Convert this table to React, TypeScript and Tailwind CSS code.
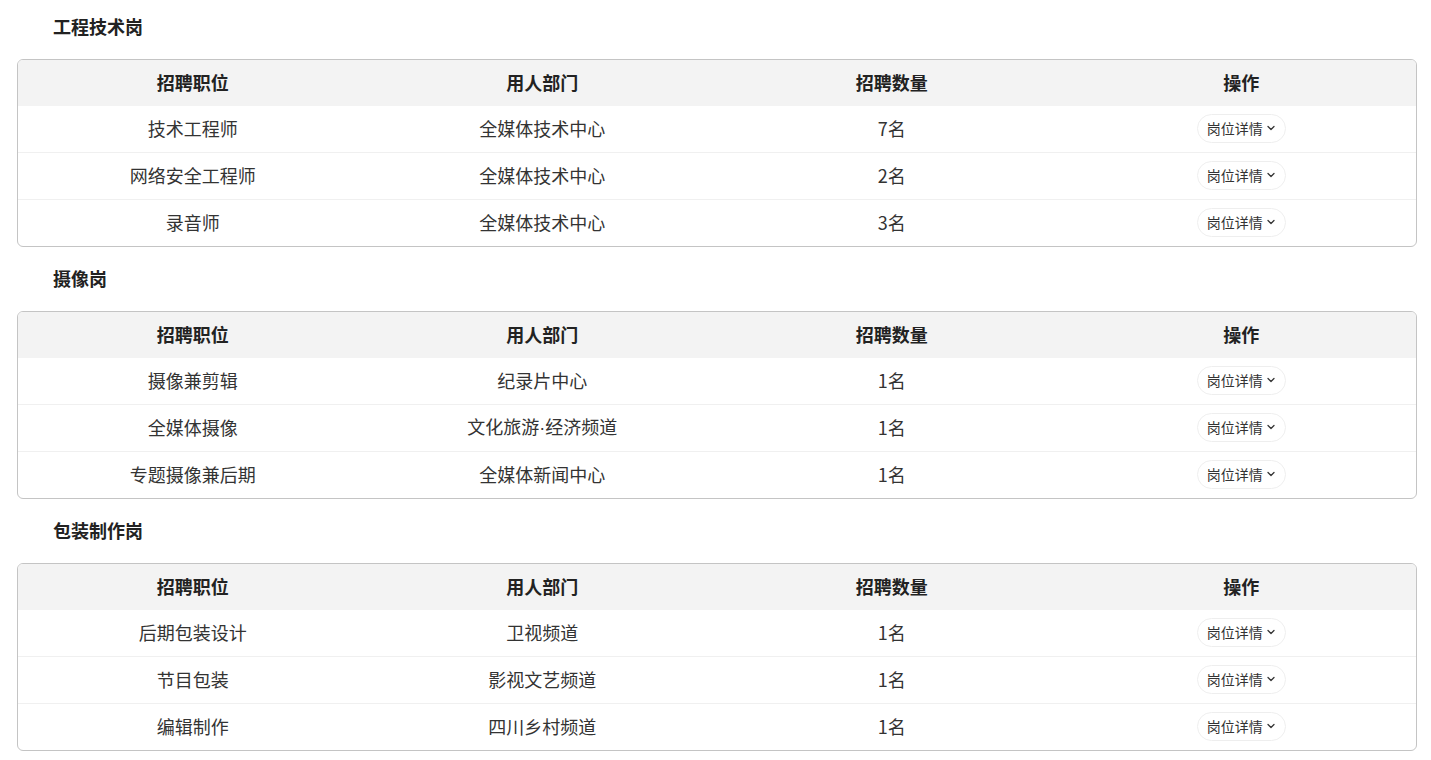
import { ChevronDown } from "lucide-react"
import type { ReactNode } from "react"

type Job = { title: string; dept: ReactNode; count: string }
type Group = { name: string; jobs: Job[] }

const dot = <span style={{ fontFamily: '"Liberation Sans", sans-serif' }}>·</span>

const groups: Group[] = [
  {
    name: "工程技术岗",
    jobs: [
      { title: "技术工程师", dept: "全媒体技术中心", count: "7名" },
      { title: "网络安全工程师", dept: "全媒体技术中心", count: "2名" },
      { title: "录音师", dept: "全媒体技术中心", count: "3名" },
    ],
  },
  {
    name: "摄像岗",
    jobs: [
      { title: "摄像兼剪辑", dept: "纪录片中心", count: "1名" },
      { title: "全媒体摄像", dept: <>文化旅游{dot}经济频道</>, count: "1名" },
      { title: "专题摄像兼后期", dept: "全媒体新闻中心", count: "1名" },
    ],
  },
  {
    name: "包装制作岗",
    jobs: [
      { title: "后期包装设计", dept: "卫视频道", count: "1名" },
      { title: "节目包装", dept: "影视文艺频道", count: "1名" },
      { title: "编辑制作", dept: "四川乡村频道", count: "1名" },
    ],
  },
]

const headers = ["招聘职位", "用人部门", "招聘数量", "操作"]

function JobTable({ jobs }: { jobs: Job[] }) {
  return (
    <div className="ml-[17px] mr-[14px] border border-[#c4c4c4] rounded-[6px] overflow-hidden">
      <div className="grid grid-cols-4 h-[46px] items-center bg-[#f3f3f3] text-[18px] font-bold text-[#222] pb-[1px]">
        {headers.map((h) => (
          <div key={h} className="text-center">
            {h}
          </div>
        ))}
      </div>
      {jobs.map((j, i) => (
        <div
          key={j.title}
          className={
            "grid grid-cols-4 items-center text-[18px] text-[#333] pb-[2px]" +
            (i > 0 ? " h-[47px] border-t border-[#f0f0f0]" : " h-[46px]")
          }
        >
          <div className="text-center">{j.title}</div>
          <div className="text-center">{j.dept}</div>
          <div className="text-center">{j.count}</div>
          <div className="flex justify-center">
            <button className="flex items-center h-[29px] pl-[9px] pr-[8px] rounded-full border border-[#eeeeee] bg-white text-[14px] leading-none text-[#333]">
              岗位详情
              <ChevronDown className="w-[12px] h-[12px] ml-[2px] text-[#333]" strokeWidth={2.5} />
            </button>
          </div>
        </div>
      ))}
    </div>
  )
}

export default function App() {
  return (
    <main
      className="w-[1431px] bg-white"
      style={{ fontFamily: '"Noto Sans CJK SC", "Noto Sans", sans-serif' }}
    >
      {groups.map((g) => (
        <section key={g.name} className="pb-[5px]">
          <h2 className="h-[59px] flex items-center pl-[53px] pb-[6px] text-[18px] font-bold text-[#222]">
            {g.name}
          </h2>
          <JobTable jobs={g.jobs} />
        </section>
      ))}
    </main>
  )
}
